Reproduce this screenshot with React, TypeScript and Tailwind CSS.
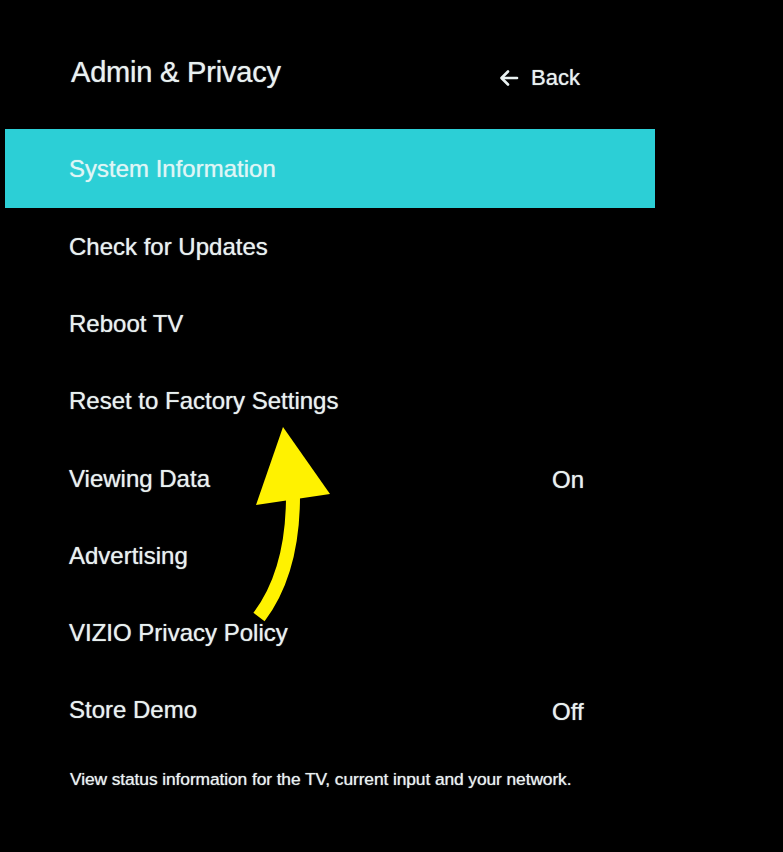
import React from "react";

const items: { label: string; value?: string }[] = [
  { label: "Check for Updates" },
  { label: "Reboot TV" },
  { label: "Reset to Factory Settings" },
  { label: "Viewing Data", value: "On" },
  { label: "Advertising" },
  { label: "VIZIO Privacy Policy" },
  { label: "Store Demo", value: "Off" },
];

export default function App() {
  return (
    <div
      className="relative w-[783px] h-[852px] bg-black overflow-hidden text-[#e9f1f1] [text-shadow:0_0_1px_rgba(233,241,241,0.8)]"
      style={{ fontFamily: '"Liberation Sans", Arial, sans-serif' }}
    >
      {/* Header */}
      <div className="flex items-start h-[129px] pt-[56px] pl-[71px]">
        <div className="w-[428px] text-[29px] leading-[32px] tracking-[-0.2px]">Admin &amp; Privacy</div>
        <div className="flex items-center gap-[12px] text-[22px] leading-[26px] mt-[9px]">
          <svg width="20" height="18" viewBox="0 0 20 18" fill="none" stroke="#e9f1f1" strokeWidth="2.6" strokeLinecap="round" strokeLinejoin="round">
            <path d="M18 9H3" />
            <path d="M9 2.5L2.5 9L9 15.5" />
          </svg>
          <span>Back</span>
        </div>
      </div>

      {/* Selected row */}
      <div className="ml-[5px] w-[650px] h-[79px] bg-[#2ccfd6] flex items-center pl-[64px]">
        <span className="text-[24px] leading-[28px] text-[#dff6f6]">System Information</span>
      </div>

      {/* Other rows */}
      <div className="flex flex-col">
        {items.map((it) => (
          <div key={it.label} className="h-[77.3px] flex items-center pl-[69px]">
            <span className="w-[483px] text-[24px] leading-[28px]">{it.label}</span>
            {it.value && <span className="text-[24px] leading-[28px] mt-[3px]">{it.value}</span>}
          </div>
        ))}
      </div>

      {/* Description */}
      <div className="pl-[70px] mt-[20px] text-[17.4px] leading-[20px] tracking-[-0.1px]">
        View status information for the TV, current input and your network.
      </div>

      {/* Yellow annotation arrow */}
      <svg className="absolute left-0 top-0 pointer-events-none" width="783" height="852" viewBox="0 0 783 852">
        <path d="M293 496 Q293 572 259 617" stroke="#fff200" strokeWidth="14" fill="none" strokeLinecap="butt" />
        <polygon points="283,427 256,505 330,494" fill="#fff200" />
      </svg>
    </div>
  );
}
